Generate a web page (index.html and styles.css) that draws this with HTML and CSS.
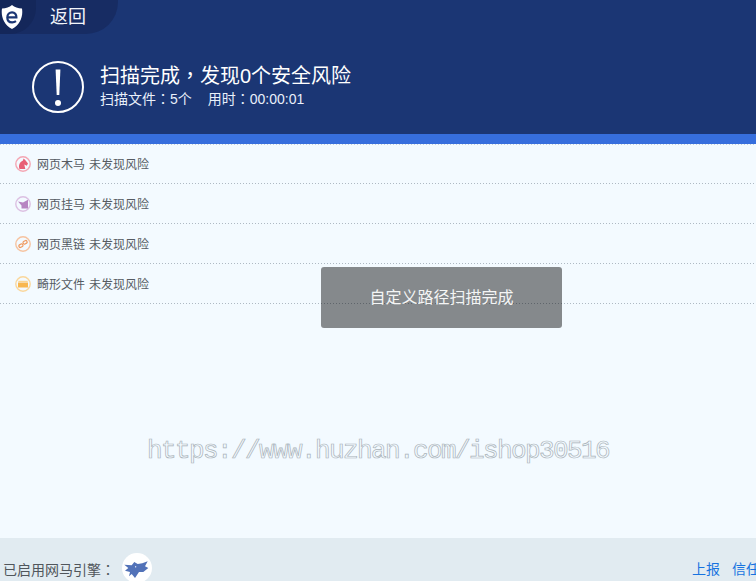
FILE: index.html
```html
<!DOCTYPE html>
<html lang="zh-CN">
<head>
<meta charset="utf-8">
<title>扫描完成</title>
<link rel="stylesheet" href="styles.css">
</head>
<body>
<div class="app">
  <header class="header">
    <div class="back">
      <div class="logo">
        <svg class="logo-icon" viewBox="0 0 22 24">
          <path d="M11 0C8.500 2.200 5 3.400 1 3.600C-.2 11 2.500 19.500 11 24C19.500 19.500 22.200 11 21 3.600C17 3.400 13.500 2.200 11 0Z" fill="#fff"/>
          <path d="M6.500 12.400H15.400C15.500 9.400 13.700 7.400 11.100 7.400C8.300 7.400 6.300 9.500 6.300 12.400C6.300 15.400 8.300 17.300 11.200 17.300C12.700 17.300 14 16.900 15 16.200" fill="none" stroke="#1b3674" stroke-width="2.200"/>
        </svg>
      </div>
      <span class="back-label">返回</span>
    </div>
    <div class="summary">
      <svg class="alert-icon" viewBox="0 0 52 52">
        <circle cx="26" cy="26" r="25" fill="none" stroke="#fff" stroke-width="2"/>
        <path d="M23.600 8.500H28.400L27.300 34H24.700Z" fill="#fff"/>
        <circle cx="26" cy="42" r="3" fill="#fff"/>
      </svg>
      <div class="summary-text">
        <div class="summary-title">扫描完成<span class="punct" lang="zh-TW">，</span>发现0个安全风险</div>
        <div class="summary-meta">
          <span>扫描文件<span class="punct" lang="zh-TW">：</span>5个</span>
          <span>用时<span class="punct" lang="zh-TW">：</span>00:00:01</span>
        </div>
      </div>
    </div>
  </header>
  <div class="band"></div>
  <main class="list">
    <div class="row">
      <svg class="row-icon" viewBox="0 0 16 16">
        <circle cx="8" cy="8" r="7.200" fill="none" stroke="#f4a6b3" stroke-width="1.400"/>
        <path d="M8.500 2.500L10 3.800L13 7.400L11.800 9.800L9.300 8.500L10.300 13H4.500C3.300 9.500 4.500 6 8 4.500Z" fill="#e85f76"/>
      </svg>
      <span>网页木马</span><span>未发现风险</span>
    </div>
    <div class="row">
      <svg class="row-icon" viewBox="0 0 16 16">
        <circle cx="8" cy="8" r="7.200" fill="none" stroke="#dcc0e2" stroke-width="1.400"/>
        <path d="M3 5.500L8 6.500L13 3.800V12.500H6.500V9.500Z" fill="#b784c2"/>
      </svg>
      <span>网页挂马</span><span>未发现风险</span>
    </div>
    <div class="row">
      <svg class="row-icon" viewBox="0 0 16 16">
        <circle cx="8" cy="8" r="7.200" fill="none" stroke="#f6c3a0" stroke-width="1.400"/>
        <rect x="3.800" y="8.200" width="4.200" height="2.800" rx="1.200" transform="rotate(-30 6 9.600)" fill="none" stroke="#ef9b62" stroke-width="1.200"/>
        <rect x="8" y="5" width="4.200" height="2.800" rx="1.200" transform="rotate(-30 10 6.400)" fill="none" stroke="#ef9b62" stroke-width="1.200"/>
      </svg>
      <span>网页黑链</span><span>未发现风险</span>
    </div>
    <div class="row">
      <svg class="row-icon" viewBox="0 0 16 16">
        <circle cx="8" cy="8" r="7.200" fill="none" stroke="#fad79c" stroke-width="1.400"/>
        <path d="M3.300 6V4.800H12.700V6Z" fill="#fbd592"/>
        <path d="M3 6.500H13V11.500H3Z" fill="#f8b74f"/>
      </svg>
      <span>畸形文件</span><span>未发现风险</span>
    </div>
  </main>
  <footer class="footer">
    <span class="engine-label">已启用网马引擎<span class="punct" lang="zh-TW">：</span></span>
    <span class="engine-logo">
      <svg class="engine-icon" viewBox="0 0 30 30">
        <path fill-rule="evenodd" d="M2.300 11.700L9.700 12.300L12.300 9L15.700 11L20.300 10.300L25.700 8.300L23 13.300L26.300 15L21.300 19L17 19L13 25L9.700 21L7 23.300L8 19L3 17.700L6.300 15ZM13 13L14.800 13.900L13 14.500Z" fill="#5272b8"/>
      </svg>
    </span>
    <nav class="footer-links">
      <a class="footer-link">上报</a>
      <a class="footer-link">信任</a>
    </nav>
  </footer>
  <div class="toast">自定义路径扫描完成</div>
  <div class="watermark">https://www.huzhan.com/ishop30516</div>
</div>
</body>
</html>
```

FILE: styles.css
```css
* {
  box-sizing: border-box;
}

html,
body {
  margin: 0;
  height: 100%;
  overflow: hidden;
}

body {
  font-family: "Liberation Sans", "Noto Sans CJK SC", sans-serif;
  background: #f3faff;
}

.app {
  position: relative;
  display: flex;
  flex-direction: column;
  height: 100vh;
  overflow: hidden;
}

.punct {
  font-family: "Noto Sans CJK TC", sans-serif;
}

.header {
  height: 134px;
  flex: none;
  background: #1b3674;
  color: #fff;
}

.back {
  display: flex;
  align-items: center;
  width: 118px;
  height: 34px;
  background: #172c63;
  border-bottom-right-radius: 32px;
}

.logo {
  display: flex;
  align-items: center;
  width: 36px;
  height: 34px;
  padding-left: 1px;
  background: #14275a;
  border-bottom-right-radius: 26px;
}

.logo-icon {
  display: block;
  width: 22px;
  height: 24px;
}

.back-label {
  margin: -4px 0 0 14px;
  font-size: 18px;
  color: #f2f5fa;
}

.summary {
  display: flex;
  align-items: center;
  gap: 16px;
  margin: 27px 0 0 32px;
}

.alert-icon {
  display: block;
  flex: none;
  width: 52px;
  height: 52px;
}

.summary-text {
  display: flex;
  flex-direction: column;
  margin-top: -7px;
}

.summary-title {
  font-size: 20px;
  line-height: 28px;
}

.summary-meta {
  display: flex;
  gap: 16px;
  font-size: 14px;
  line-height: 16px;
  color: #e9f0fb;
}

.band {
  height: 10px;
  flex: none;
  background: #366edd;
}

.list {
  flex: 1;
  padding-top: 1px;
  background: repeating-linear-gradient(90deg, #c3cdd6 0 1px, transparent 1px 3px) top / 100% 1px no-repeat;
}

.row {
  display: flex;
  align-items: center;
  gap: 4px;
  height: 40px;
  padding: 0 0 1px 15px;
  background: repeating-linear-gradient(90deg, #aeb9c3 0 1px, transparent 1px 3px) bottom / 100% 1px no-repeat;
  font-size: 12px;
  color: #555b62;
}

.row:first-child {
  height: 39px;
  padding-bottom: 2px;
}

.row-icon {
  display: block;
  flex: none;
  width: 16px;
  height: 16px;
  margin-right: 2px;
}

.footer {
  display: flex;
  align-items: flex-start;
  height: 43px;
  flex: none;
  padding-left: 3px;
  background: #e1ebf1;
  font-size: 14px;
  color: #50565c;
}

.engine-label {
  margin-top: 21px;
  line-height: 20px;
}

.engine-logo {
  display: flex;
  flex: none;
  width: 30px;
  height: 30px;
  margin: 15px 0 0 7px;
  border-radius: 50%;
  background: #fff;
}

.engine-icon {
  display: block;
  width: 30px;
  height: 30px;
}

.footer-links {
  display: flex;
  flex: none;
  gap: 12px;
  margin: 21px -4px 0 auto;
  line-height: 20px;
}

.footer-link {
  color: #1773e0;
}

.toast {
  position: absolute;
  left: 321px;
  top: 267px;
  width: 241px;
  height: 61px;
  border-radius: 3px;
  background: rgba(0, 0, 0, 0.45);
  color: #f4f5f5;
  font-size: 16px;
  line-height: 61px;
  text-align: center;
}

.watermark {
  position: absolute;
  left: 147px;
  top: 436px;
  font-family: "Liberation Mono", monospace;
  font-size: 26px;
  line-height: 30px;
  letter-spacing: -1.6px;
  white-space: nowrap;
  color: #f3faff;
  -webkit-text-stroke: 0.7px #a9b2b9;
}
```
